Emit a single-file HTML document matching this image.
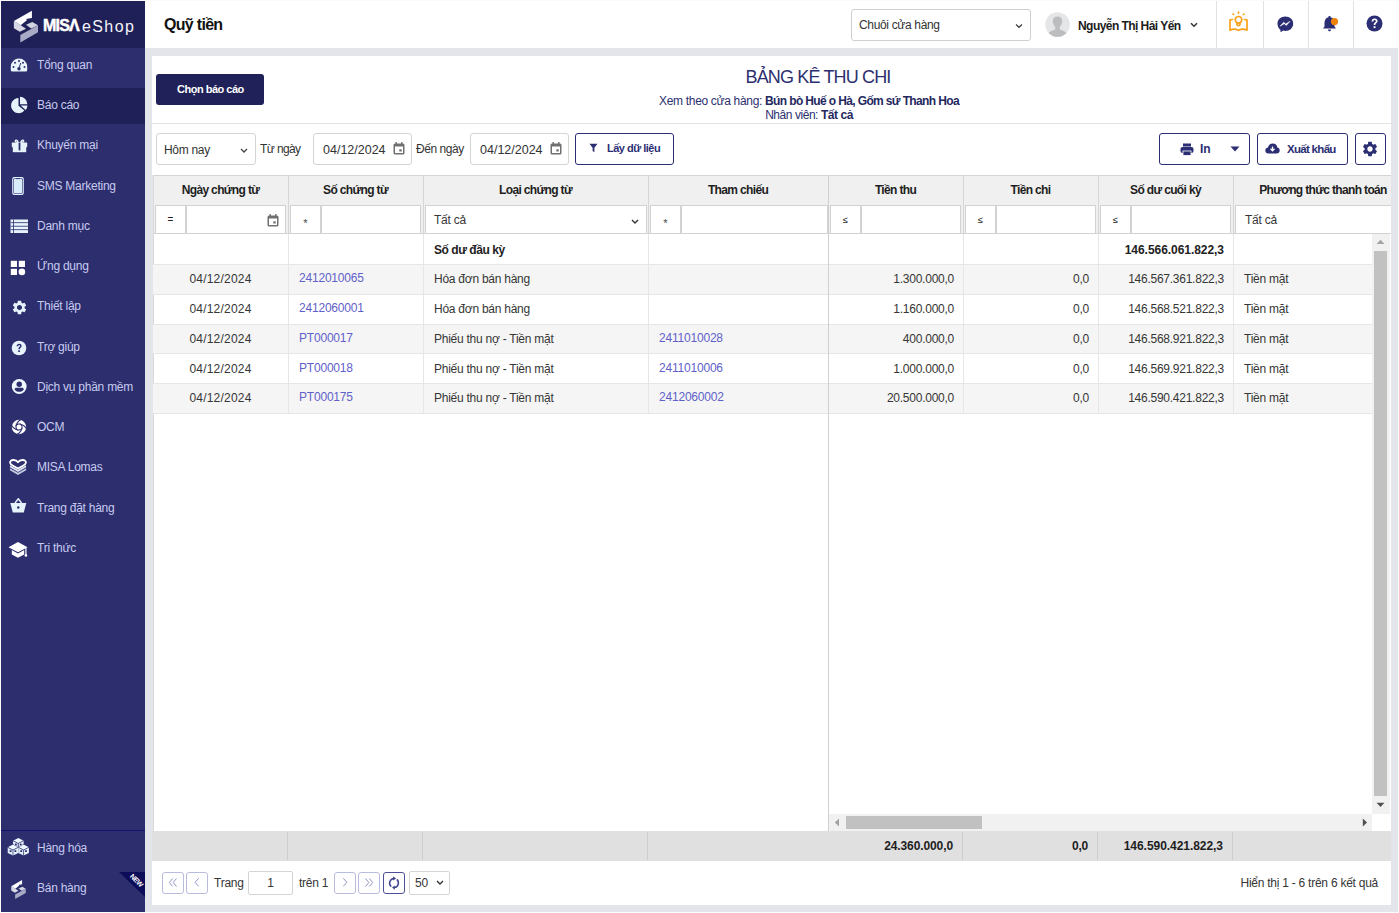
<!DOCTYPE html>
<html><head><meta charset="utf-8">
<style>
*{box-sizing:border-box;margin:0;padding:0}
html,body{width:1399px;height:913px;overflow:hidden;background:#fcfafa}
body{font-family:"Liberation Sans",sans-serif;color:#212121;position:relative}
.a{position:absolute;white-space:nowrap}
.t12{font-size:12px;line-height:14px}
.st{color:#c8cbee;font-size:12px;line-height:14px;letter-spacing:-0.25px;left:37px}
.ic{position:absolute}
.hd{font-size:12px;line-height:14px;font-weight:bold;color:#1e1e1e;letter-spacing:-0.65px;top:183px;text-align:center}
.op{position:absolute;top:205px;height:29px;width:31px;border:1px solid #d2d2d2;background:#fff;font-size:10px;line-height:28px;text-align:center;color:#222}
.inp{position:absolute;top:205px;height:29px;border:1px solid #d2d2d2;background:#fff}
.row{position:absolute;left:153px;width:1219px;height:30px}
.rb{position:absolute;left:153px;width:1219px;height:1px;background:#e6e6e6}
.cd{position:absolute;width:1px;background:#e6e6e6}
.tx{font-size:12px;line-height:14px;letter-spacing:-0.25px;color:#363636}
.lk{font-size:12px;line-height:14px;letter-spacing:-0.2px;color:#5f61c9}
.pb{position:absolute;top:872px;height:22px;width:22px;border:1px solid #b3b6d8;border-radius:3px;background:#fff}
</style></head><body>
<!-- SIDEBAR -->
<div class="a" style="left:1px;top:1px;width:144px;height:911px;background:#2c2e6e"></div>
<div class="a" style="left:1px;top:1px;width:144px;height:47px;background:#1f2057"></div>
<div class="a" style="left:1px;top:88px;width:144px;height:36px;background:#1f2057"></div>
<div class="a" style="left:1px;top:830px;width:144px;height:1px;background:#170f6c"></div>
<!-- logo -->
<svg class="ic" style="left:0;top:0" width="50" height="48" viewBox="0 0 50 48">
  <path d="M13.9 21.1 L31.9 10.8 L31.9 18 L26 19.1 L27.1 20 L20.7 25.3 Z" fill="#ffffff"/>
  <path d="M13.9 21.1 L20.7 25.3 L26 28.8 L19.8 31.8 L13.9 28.3 Z" fill="#d9d9e6"/>
  <path d="M26 24.8 L32.3 22 L38 25.3 L31.2 28.6 Z" fill="#d4d5e3"/>
  <path d="M20.3 34.9 L38 25.3 L38 32.3 L20.3 42.4 Z" fill="#a9abc6"/>
</svg>
<div class="a" style="left:43px;top:17px;font-size:16px;line-height:18px;font-weight:bold;color:#fff;letter-spacing:-0.8px;-webkit-text-stroke:0.5px #fff">MISΛ</div>
<div class="a" style="left:82px;top:18px;font-size:16px;line-height:18px;color:#f4f4fa;letter-spacing:1.4px">eShop</div>
<!-- menu -->
<svg class="ic" style="left:10px;top:58px" width="18" height="14" viewBox="0 0 18 14"><path d="M9 0.6 A8.2 8.2 0 0 0 0.8 8.8 L0.8 12 Q0.8 13.6 2.4 13.6 L15.6 13.6 Q17.2 13.6 17.2 12 L17.2 8.8 A8.2 8.2 0 0 0 9 0.6 Z" fill="#e9f5fc"/><circle cx="3.5" cy="8.9" r="1" fill="#2c2e6e"/><circle cx="5" cy="4.8" r="1" fill="#2c2e6e"/><circle cx="9" cy="3" r="1" fill="#2c2e6e"/><circle cx="13" cy="4.8" r="1" fill="#2c2e6e"/><circle cx="14.5" cy="8.9" r="1" fill="#2c2e6e"/><path d="M9 10.6 L10.6 5.3" stroke="#2c2e6e" stroke-width="1" stroke-linecap="round"/><circle cx="9" cy="10.7" r="1.7" fill="#2c2e6e"/></svg>
<div class="a st" style="top:58px">Tổng quan</div>
<svg class="ic" style="left:10.6px;top:96px" width="18" height="18" viewBox="0 0 18 18"><path d="M7.5 2 L7.5 9.8 L13.4 14.6 A7.6 7.6 0 1 1 7.5 2 Z" fill="#e6f3fb"/><path d="M9 0.8 A7.3 7.3 0 0 1 16.3 8.2 L9 8.2 Z" fill="#e6f3fb"/><path d="M9.6 9.6 L16.5 9.6 A7.4 7.4 0 0 1 14.7 13.9 Z" fill="#e6f3fb"/></svg>
<div class="a st" style="top:98px">Báo cáo</div>
<svg class="ic" style="left:11px;top:138px" width="17" height="15" viewBox="0 0 17 15"><path d="M7.3 4.4 C6.4 1.6 4.2 1.6 4.3 3.2 C4.4 4 5.6 4.4 7.3 4.4 M9.7 4.4 C10.6 1.6 12.8 1.6 12.7 3.2 C12.6 4 11.4 4.4 9.7 4.4" fill="none" stroke="#e6f3fb" stroke-width="1.3"/><rect x="0.8" y="4.6" width="15.4" height="4.6" rx="0.6" fill="#e6f3fb"/><rect x="1.8" y="8.6" width="13.4" height="5.6" fill="#e6f3fb"/><rect x="7.6" y="5" width="1.8" height="7.4" fill="#2c2e6e"/></svg>
<div class="a st" style="top:138px">Khuyến mại</div>
<svg class="ic" style="left:11px;top:176px" width="14" height="20" viewBox="0 0 14 20"><rect x="1.2" y="1" width="11.6" height="18" rx="2" fill="#e6f3fb"/><rect x="2.4" y="2.2" width="9.2" height="15.6" rx="1" fill="#2c2e6e"/><rect x="3" y="2.8" width="8" height="14.4" rx="0.6" fill="#d8ecfa"/><rect x="5" y="2.2" width="4" height="0.9" fill="#2c2e6e"/></svg>
<div class="a st" style="top:179px">SMS Marketing</div>
<svg class="ic" style="left:10px;top:219px" width="19" height="15" viewBox="0 0 19 15"><rect x="0.5" y="0.5" width="17.5" height="13.5" fill="#e6f3fb"/><rect x="0.5" y="3.3" width="17.5" height="0.8" fill="#2c2e6e"/><rect x="0.5" y="6.8" width="17.5" height="0.8" fill="#2c2e6e"/><rect x="0.5" y="10.3" width="17.5" height="0.8" fill="#2c2e6e"/><rect x="3" y="0.5" width="0.8" height="13.5" fill="#2c2e6e"/></svg>
<div class="a st" style="top:219px">Danh mục</div>
<svg class="ic" style="left:10px;top:260px" width="17" height="17" viewBox="0 0 17 17"><rect x="0.8" y="0.8" width="6.2" height="6.2" fill="#fff"/><rect x="8.8" y="0.8" width="6.2" height="6.2" fill="#fff"/><rect x="0.8" y="8.8" width="6.2" height="6.2" fill="#fff"/><circle cx="11.9" cy="11.9" r="3.3" fill="#fff"/></svg>
<div class="a st" style="top:259px">Ứng dụng</div>
<svg class="ic" style="left:11px;top:299px" width="17" height="17" viewBox="0 0 24 24"><path fill="#e6f3fb" d="M19.14 12.94c.04-.3.06-.61.06-.94 0-.32-.02-.64-.07-.94l2.03-1.58a.49.49 0 0 0 .12-.61l-1.92-3.32a.488.488 0 0 0-.59-.22l-2.39.96c-.5-.38-1.03-.7-1.62-.94l-.36-2.54a.484.484 0 0 0-.48-.41h-3.84c-.24 0-.43.17-.47.41l-.36 2.54c-.59.24-1.13.57-1.62.94l-2.39-.96c-.22-.08-.47 0-.59.22L2.74 8.87c-.12.21-.08.47.12.61l2.03 1.58c-.05.3-.09.63-.09.94s.02.64.07.94l-2.03 1.58a.49.49 0 0 0-.12.61l1.92 3.32c.12.22.37.29.59.22l2.39-.96c.5.38 1.03.7 1.62.94l.36 2.54c.05.24.24.41.48.41h3.84c.24 0 .44-.17.47-.41l.36-2.54c.59-.24 1.13-.56 1.62-.94l2.39.96c.22.08.47 0 .59-.22l1.92-3.32c.12-.22.07-.47-.12-.61l-2.01-1.58zM12 15.6c-1.98 0-3.6-1.62-3.6-3.6s1.62-3.6 3.6-3.6 3.6 1.62 3.6 3.6-1.62 3.6-3.6 3.6z"/></svg>
<div class="a st" style="top:299px">Thiết lập</div>
<svg class="ic" style="left:11px;top:340px" width="16" height="16" viewBox="0 0 16 16"><circle cx="8" cy="8" r="7.3" fill="#e6f3fb"/><path d="M5.6 6.2 C5.6 4.6 6.7 3.7 8.1 3.7 C9.6 3.7 10.6 4.6 10.6 5.9 C10.6 7.5 8.8 7.6 8.8 9.3 L7.3 9.3 C7.3 7.2 9 7.2 9 6 C9 5.4 8.6 5.1 8.1 5.1 C7.5 5.1 7.2 5.5 7.2 6.2 Z" fill="#2c2e6e"/><rect x="7.2" y="10.3" width="1.7" height="1.7" fill="#2c2e6e"/></svg>
<div class="a st" style="top:340px">Trợ giúp</div>
<svg class="ic" style="left:11px;top:379px" width="16" height="16" viewBox="0 0 16 16"><circle cx="8.2" cy="7.5" r="7.4" fill="#eef8fd"/><circle cx="8.2" cy="5.3" r="2.7" fill="#2c2e6e"/><path d="M3.6 10.4 C3.6 9.2 4.5 8.7 5.5 8.7 L10.9 8.7 C11.9 8.7 12.8 9.2 12.8 10.4 C11.9 12.1 10.2 12.8 8.2 12.8 C6.2 12.8 4.5 12.1 3.6 10.4 Z" fill="#2c2e6e"/></svg>
<div class="a st" style="top:380px">Dịch vụ phần mềm</div>
<svg class="ic" style="left:11px;top:419px" width="16" height="16" viewBox="0 0 16 16"><circle cx="8" cy="8" r="7.2" fill="#fff"/><circle cx="8" cy="8" r="3.5" fill="#2c2e6e"/><path d="M4.75 7.43 C5.59 4.56 7.45 1.72 10.04 0.37" fill="none" stroke="#2c2e6e" stroke-width="1.15"/><path d="M8.57 4.75 C11.44 5.59 14.28 7.45 15.63 10.04" fill="none" stroke="#2c2e6e" stroke-width="1.15"/><path d="M11.25 8.57 C10.41 11.44 8.55 14.28 5.96 15.63" fill="none" stroke="#2c2e6e" stroke-width="1.15"/><path d="M7.43 11.25 C4.56 10.41 1.72 8.55 0.37 5.96" fill="none" stroke="#2c2e6e" stroke-width="1.15"/><circle cx="8" cy="8" r="2.5" fill="#fff"/></svg>
<div class="a st" style="top:420px">OCM</div>
<svg class="ic" style="left:9px;top:459px" width="19" height="17" viewBox="0 0 19 17"><path d="M0.9 9.2 L9 13.8 L17.1 9.2 L17.1 11.3 L9 15.9 L0.9 11.3 Z" fill="#c2c7de"/><path d="M0.9 6.2 L9 10.8 L17.1 6.2 L17.1 8.3 L9 12.9 L0.9 8.3 Z" fill="#dfe5f2"/><path d="M9 3.3 C7.8 1.4 5.8 0.9 4.2 1 C2.1 1.1 1 2.3 1.1 3.7 C1.2 4.9 2.4 5.8 4 6.7 L9 9.5 L14 6.7 C15.6 5.8 16.8 4.9 16.9 3.7 C17 2.3 15.9 1.1 13.8 1 C12.2 0.9 10.2 1.4 9 3.3 Z" fill="#2c2e6e" stroke="#ffffff" stroke-width="1.8" stroke-linejoin="round"/></svg>
<div class="a st" style="top:460px">MISA Lomas</div>
<svg class="ic" style="left:10px;top:498px" width="17" height="16" viewBox="0 0 17 16"><path d="M5 5 L8.3 0.8 L11.6 5" fill="none" stroke="#e6f3fb" stroke-width="1.5"/><path d="M0.3 5 L16.3 5 L13.8 14.5 L2.8 14.5 Z" fill="#e6f3fb"/><circle cx="8.3" cy="9.5" r="1.2" fill="#2c2e6e"/></svg>
<div class="a st" style="top:501px">Trang đặt hàng</div>
<svg class="ic" style="left:8px;top:541px" width="21" height="18" viewBox="0 0 21 18"><path d="M0.5 6.2 L10 1 L19.5 6.2 L10 11.2 Z" fill="#fff"/><path d="M3.8 9 L3.8 13.5 L10 16.8 L16.2 13.5 L16.2 9 L10 12.4 Z" fill="#fff"/><rect x="17.3" y="6.5" width="1.2" height="7" fill="#fff"/><circle cx="17.9" cy="14.4" r="1.3" fill="#fff"/></svg>
<div class="a st" style="top:541px">Tri thức</div>
<svg class="ic" style="left:7px;top:837px" width="23" height="20" viewBox="0 0 23 20"><path d="M11.3 1 L16.6 3.7 L11.3 6.4 L6.000000000000001 3.7 Z" fill="#eef7fd"/><path d="M6.000000000000001 3.7 L11.3 6.4 L11.3 12 L6.000000000000001 9.3 Z" fill="#dcebf7"/><path d="M11.3 6.4 L16.6 3.7 L16.6 9.3 L11.3 12 Z" fill="#e6f3fb"/><path d="M6.000000000000001 3.7 L11.3 6.4 L16.6 3.7 M11.3 6.4 L11.3 12" fill="none" stroke="#2c2e6e" stroke-width="0.7"/><rect x="8.0" y="6.6" width="1.8" height="1.8" fill="#2c2e6e"/><rect x="12.8" y="6.6" width="1.8" height="1.8" fill="#2c2e6e"/><path d="M0.3 10 L5.9 7 L11.3 10 L16.7 7 L22.3 10 L22.3 16.5 L11.3 19.5 L0.3 16.5 Z" fill="#2c2e6e"/><path d="M6 7.6 L11.3 10.3 L6 13.0 L0.7000000000000002 10.3 Z" fill="#eef7fd"/><path d="M0.7000000000000002 10.3 L6 13.0 L6 18.6 L0.7000000000000002 15.9 Z" fill="#dcebf7"/><path d="M6 13.0 L11.3 10.3 L11.3 15.9 L6 18.6 Z" fill="#e6f3fb"/><path d="M0.7000000000000002 10.3 L6 13.0 L11.3 10.3 M6 13.0 L6 18.6" fill="none" stroke="#2c2e6e" stroke-width="0.7"/><rect x="2.7" y="13.2" width="1.8" height="1.8" fill="#2c2e6e"/><rect x="7.5" y="13.2" width="1.8" height="1.8" fill="#2c2e6e"/><path d="M16.6 7.6 L21.900000000000002 10.3 L16.6 13.0 L11.3 10.3 Z" fill="#eef7fd"/><path d="M11.3 10.3 L16.6 13.0 L16.6 18.6 L11.3 15.9 Z" fill="#dcebf7"/><path d="M16.6 13.0 L21.900000000000002 10.3 L21.900000000000002 15.9 L16.6 18.6 Z" fill="#e6f3fb"/><path d="M11.3 10.3 L16.6 13.0 L21.900000000000002 10.3 M16.6 13.0 L16.6 18.6" fill="none" stroke="#2c2e6e" stroke-width="0.7"/><rect x="13.3" y="13.2" width="1.8" height="1.8" fill="#2c2e6e"/><rect x="18.1" y="13.2" width="1.8" height="1.8" fill="#2c2e6e"/></svg>
<div class="a st" style="top:841px">Hàng hóa</div>
<svg class="ic" style="left:11px;top:880px" width="15" height="19" viewBox="13.9 10.8 24.1 31.6">
  <path d="M13.9 21.1 L31.9 10.8 L31.9 18 L26 19.1 L27.1 20 L20.7 25.3 Z" fill="#ffffff"/>
  <path d="M13.9 21.1 L20.7 25.3 L26 28.8 L19.8 31.8 L13.9 28.3 Z" fill="#d9d9e6"/>
  <path d="M26 24.8 L32.3 22 L38 25.3 L31.2 28.6 Z" fill="#d4d5e3"/>
  <path d="M20.3 34.9 L38 25.3 L38 32.3 L20.3 42.4 Z" fill="#a9abc6"/>
</svg>
<div class="a st" style="top:881px">Bán hàng</div>
<svg class="ic" style="left:119px;top:872px" width="26" height="26" viewBox="0 0 26 26"><path d="M0 0 L26 0 L26 25 Z" fill="#0d0c58"/><text x="17.5" y="8.5" transform="rotate(45 17.5 8.5)" font-family="Liberation Sans" font-size="7" font-weight="bold" fill="#fff" text-anchor="middle" dy="2.3" letter-spacing="-0.3">NEW</text></svg>
<!-- HEADER -->
<div class="a" style="left:145px;top:1px;width:1253px;height:47px;background:#fff"></div>
<div class="a" style="left:145px;top:48px;width:1253px;height:864px;background:#e4e5ea"></div>
<div class="a" style="left:164px;top:16px;font-size:16px;line-height:18px;font-weight:bold;color:#111;letter-spacing:-0.7px">Quỹ tiền</div>
<div class="a" style="left:851px;top:9px;width:180px;height:32px;border:1px solid #cfcfcf;border-radius:3px;background:#fff"></div>
<div class="a t12" style="left:859px;top:18px;color:#333;letter-spacing:-0.34px">Chuôi cửa hàng</div>
<svg class="ic" style="left:1015px;top:23px" width="8" height="6" viewBox="0 0 8 6"><path d="M1 1.5 L4 4.3 L7 1.5" fill="none" stroke="#444" stroke-width="1.3"/></svg>
<svg class="ic" style="left:1045px;top:12px" width="25" height="25" viewBox="0 0 25 25"><defs><clipPath id="av"><circle cx="12.5" cy="12.5" r="12.3"/></clipPath></defs><circle cx="12.5" cy="12.5" r="12.3" fill="#e5e6e8"/><path clip-path="url(#av)" fill="#bcbdbf" d="M2.5 22.5 C4 19.5 7.5 18.6 10.2 17.6 L10.2 14.8 C8.8 13.8 8.3 12 8.1 10.8 C7.5 10.6 7.4 9.6 7.9 9.3 C7.9 6 9.6 4.6 12.5 4.6 C15.4 4.6 17.1 6 17.1 9.3 C17.6 9.6 17.5 10.6 16.9 10.8 C16.7 12 16.2 13.8 14.8 14.8 L14.8 17.6 C17.5 18.6 21 19.5 22.5 22.5 L22.5 25 L2.5 25 Z"/></svg>
<div class="a" style="left:1078px;top:19px;font-size:12px;line-height:14px;font-weight:bold;color:#1c1c1c;letter-spacing:-0.55px">Nguyễn Thị Hải Yến</div>
<svg class="ic" style="left:1190px;top:22px" width="8" height="6" viewBox="0 0 8 6"><path d="M1 1.2 L4 4.2 L7 1.2" fill="none" stroke="#333" stroke-width="1.5"/></svg>
<div class="a" style="left:1216px;top:1px;width:1px;height:47px;background:#e2e2e6"></div>
<div class="a" style="left:1263px;top:1px;width:1px;height:47px;background:#e2e2e6"></div>
<div class="a" style="left:1308px;top:1px;width:1px;height:47px;background:#e2e2e6"></div>
<div class="a" style="left:1353px;top:1px;width:1px;height:47px;background:#e2e2e6"></div>
<svg class="ic" style="left:1228px;top:11px" width="21" height="21" viewBox="0 0 21 21"><g fill="none" stroke="#f9a11b" stroke-width="1.7" stroke-linecap="round" stroke-linejoin="round"><path d="M4.4 8.5 L2 8.9 L2 19.2 C4.5 17.9 7.8 18 10.5 19.3 C13.2 18 16.5 17.9 19 19.2 L19 8.9 L16.6 8.5"/><circle cx="10.5" cy="8.8" r="3.3"/><path d="M9 12 L9 13.8 Q10.5 15.6 12 13.8 L12 12"/></g><ellipse cx="10.5" cy="1.6" rx="0.9" ry="1.3" fill="#f9a11b"/><ellipse cx="5.3" cy="3.3" rx="1.2" ry="0.9" transform="rotate(30 5.3 3.3)" fill="#f9a11b"/><ellipse cx="15.7" cy="3.3" rx="1.2" ry="0.9" transform="rotate(-30 15.7 3.3)" fill="#f9a11b"/></svg>
<svg class="ic" style="left:1277px;top:16px" width="17" height="17" viewBox="0 0 17 17"><path d="M8.3 0.5 C12.8 0.5 16.2 3.6 16.2 7.7 C16.2 11.8 12.8 14.9 8.3 14.9 C7.6 14.9 6.9 14.8 6.3 14.6 L3.6 16.3 L3.4 13.8 C1.6 12.5 0.5 10.3 0.5 7.7 C0.5 3.6 3.8 0.5 8.3 0.5 Z" fill="#2b2e73"/><path d="M3 10.2 L6.8 6.2 L8.7 8 L13 5.3 L9.3 9.6 L7.3 7.7 Z" fill="#fff" stroke="#fff" stroke-width="0.5" stroke-linejoin="round"/></svg>
<svg class="ic" style="left:1322px;top:15px" width="17" height="18" viewBox="0 0 17 18"><path d="M7.5 1 C8.3 1 8.6 1.5 8.6 2.2 C11.2 2.9 12.5 5 12.5 7.8 L12.5 11.5 L14 13.5 L1 13.5 L2.5 11.5 L2.5 7.8 C2.5 5 3.8 2.9 6.4 2.2 C6.4 1.5 6.7 1 7.5 1 Z" fill="#2b2e73"/><path d="M6 14.5 L9 14.5 C9 15.5 8.4 16.3 7.5 16.3 C6.6 16.3 6 15.5 6 14.5 Z" fill="#2b2e73"/><circle cx="12.5" cy="6.6" r="3.6" fill="#ee8208"/></svg>
<svg class="ic" style="left:1366px;top:15px" width="17" height="17" viewBox="0 0 17 17"><circle cx="8.5" cy="8.5" r="8" fill="#2b2e73"/><path d="M5.6 6.4 C5.6 4.6 6.8 3.5 8.6 3.5 C10.4 3.5 11.6 4.6 11.6 6.1 C11.6 8 9.4 8.1 9.4 10.1 L7.7 10.1 C7.7 7.6 9.8 7.6 9.8 6.3 C9.8 5.5 9.3 5.1 8.6 5.1 C7.8 5.1 7.4 5.6 7.4 6.4 Z" fill="#fff"/><rect x="7.6" y="11.2" width="1.9" height="1.9" fill="#fff"/></svg>
<!-- CARD -->
<div class="a" style="left:152px;top:56px;width:1239px;height:849px;background:#fff"></div>
<div class="a" style="left:156px;top:74px;width:108px;height:31px;background:#1f2158;border-radius:3px"></div>
<div class="a" style="left:177px;top:83px;font-size:11px;line-height:13px;font-weight:bold;color:#fff;letter-spacing:-0.5px">Chọn báo cáo</div>
<div class="a" style="left:668px;top:67px;width:300px;text-align:center;font-size:18px;line-height:20px;color:#2c2f6f;letter-spacing:-0.85px">BẢNG KÊ THU CHI</div>
<div class="a t12" style="left:559px;top:94px;width:500px;text-align:center;color:#2c2f6f;letter-spacing:-0.32px">Xem theo cửa hàng: <b style="color:#25285f;letter-spacing:-0.63px">Bún bò Huế o Hà, Gốm sứ Thanh Hoa</b></div>
<div class="a t12" style="left:659px;top:108px;width:300px;text-align:center;color:#2c2f6f;letter-spacing:-0.45px">Nhân viên: <b style="color:#25285f">Tất cả</b></div>
<div class="a" style="left:152px;top:123px;width:1239px;height:1px;background:#e3e3e3"></div>
<!-- filter bar -->
<div class="a" style="left:156px;top:133px;width:100px;height:32px;border:1px solid #d4d4d4;border-radius:3px"></div>
<div class="a t12" style="left:164px;top:143px;color:#333;letter-spacing:-0.3px">Hôm nay</div>
<svg class="ic" style="left:240px;top:148px" width="8" height="5" viewBox="0 0 8 5"><path d="M1 1 L4 4 L7 1" fill="none" stroke="#444" stroke-width="1.3"/></svg>
<div class="a t12" style="left:260px;top:142px;color:#333;letter-spacing:-0.6px">Từ ngày</div>
<div class="a" style="left:313px;top:133px;width:99px;height:32px;border:1px solid #d4d4d4;border-radius:3px"></div>
<div class="a" style="left:323px;top:143px;font-size:12.5px;line-height:14px;color:#333;letter-spacing:0px">04/12/2024</div>
<svg class="ic" style="left:393px;top:142px" width="12" height="13" viewBox="0 0 12 13"><rect x="0.5" y="1.5" width="11" height="11" rx="1.5" fill="#707070"/><rect x="2" y="4.5" width="8" height="6.5" fill="#fff"/><rect x="6.3" y="7.3" width="2.4" height="2.2" fill="#707070"/><rect x="2.5" y="0" width="1.4" height="2.5" fill="#707070"/><rect x="8.1" y="0" width="1.4" height="2.5" fill="#707070"/></svg>
<div class="a t12" style="left:416px;top:142px;color:#333;letter-spacing:-0.45px">Đến ngày</div>
<div class="a" style="left:470px;top:133px;width:99px;height:32px;border:1px solid #d4d4d4;border-radius:3px"></div>
<div class="a" style="left:480px;top:143px;font-size:12.5px;line-height:14px;color:#333;letter-spacing:0px">04/12/2024</div>
<svg class="ic" style="left:550px;top:142px" width="12" height="13" viewBox="0 0 12 13"><rect x="0.5" y="1.5" width="11" height="11" rx="1.5" fill="#707070"/><rect x="2" y="4.5" width="8" height="6.5" fill="#fff"/><rect x="6.3" y="7.3" width="2.4" height="2.2" fill="#707070"/><rect x="2.5" y="0" width="1.4" height="2.5" fill="#707070"/><rect x="8.1" y="0" width="1.4" height="2.5" fill="#707070"/></svg>
<div class="a" style="left:575px;top:133px;width:99px;height:32px;border:1px solid #2b2e73;border-radius:3px"></div>
<svg class="ic" style="left:589px;top:143px" width="9" height="10" viewBox="0 0 9 10"><path d="M0.5 0.8 L8.5 0.8 L5.4 4.8 L5.4 9.2 L3.6 8 L3.6 4.8 Z" fill="#2b2e73"/></svg>
<div class="a" style="left:607px;top:142px;font-size:11px;line-height:13px;font-weight:bold;color:#2b2e73;letter-spacing:-0.5px">Lấy dữ liệu</div>
<!-- right buttons -->
<div class="a" style="left:1159px;top:133px;width:91px;height:32px;border:1px solid #2b2e73;border-radius:3px"></div>
<svg class="ic" style="left:1180px;top:143px" width="14" height="13" viewBox="0 0 14 13"><rect x="3" y="0.5" width="8" height="3" fill="#2b2e73"/><rect x="0.5" y="4" width="13" height="6" rx="2" fill="#2b2e73"/><rect x="3" y="8" width="8" height="4.5" fill="#2b2e73" stroke="#fff" stroke-width="0.8"/></svg>
<div class="a" style="left:1200px;top:142px;font-size:12px;line-height:14px;font-weight:bold;color:#2b2e73">In</div>
<svg class="ic" style="left:1230px;top:146px" width="10" height="6" viewBox="0 0 10 6"><path d="M0.5 0.5 L9.5 0.5 L5 5.5 Z" fill="#2b2e73"/></svg>
<div class="a" style="left:1257px;top:133px;width:91px;height:32px;border:1px solid #2b2e73;border-radius:3px"></div>
<svg class="ic" style="left:1265px;top:143px" width="15" height="11" viewBox="0 0 15 11"><path d="M3.5 10.5 C1.5 10.5 0.3 9.2 0.3 7.5 C0.3 5.9 1.5 4.8 3 4.6 C3.5 2.2 5.3 0.5 7.8 0.5 C10.2 0.5 12 2.1 12.3 4.5 C13.8 4.7 14.7 5.9 14.7 7.4 C14.7 9.2 13.4 10.5 11.6 10.5 Z" fill="#2b2e73"/><path d="M7.5 3.5 L7.5 7.5 M5.5 5.8 L7.5 7.9 L9.5 5.8" fill="none" stroke="#fff" stroke-width="1.3"/></svg>
<div class="a" style="left:1287px;top:142px;font-size:11.5px;line-height:14px;font-weight:bold;color:#2b2e73;letter-spacing:-0.7px">Xuất khẩu</div>
<div class="a" style="left:1355px;top:133px;width:31px;height:32px;border:1px solid #2b2e73;border-radius:3px"></div>
<svg class="ic" style="left:1361px;top:140px" width="18" height="18" viewBox="0 0 24 24"><path fill="#2b2e73" d="M19.14 12.94c.04-.3.06-.61.06-.94 0-.32-.02-.64-.07-.94l2.03-1.58a.49.49 0 0 0 .12-.61l-1.92-3.32a.488.488 0 0 0-.59-.22l-2.39.96c-.5-.38-1.03-.7-1.62-.94l-.36-2.54a.484.484 0 0 0-.48-.41h-3.840c-.24 0-.43.17-.47.41l-.36 2.54c-.59.24-1.130.57-1.62.94l-2.39-.96c-.22-.08-.47 0-.59.22L2.74 8.87c-.12.21-.08.47.12.61l2.03 1.58c-.05.3-.09.63-.09.94s.02.64.07.94l-2.03 1.58a.49.49 0 0 0-.12.61l1.92 3.32c.12.22.37.29.59.22l2.39-.96c.5.38 1.03.7 1.62.94l.36 2.54c.05.24.24.41.48.41h3.84c.24 0 .44-.17.47-.41l.36-2.54c.59-.24 1.13-.56 1.62-.94l2.39.96c.22.08.47 0 .59-.22l1.92-3.320c.12-.22.07-.47-.12-.61l-2.01-1.58zM12 15.6c-1.98 0-3.6-1.62-3.6-3.6s1.62-3.6 3.6-3.6 3.6 1.62 3.6 3.6-1.62 3.6-3.6 3.6z"/></svg>
<!-- TABLE -->
<div class="a" style="left:154px;top:175px;width:1237px;height:1px;background:#d5d5d5"></div>
<div class="a" style="left:154px;top:176px;width:1237px;height:58px;background:#f0f0f0"></div>
<div class="a" style="left:153px;top:233px;width:1238px;height:1px;background:#d5d5d5"></div>
<div class="a" style="left:152px;top:175px;width:1px;height:656px;background:#e4e5ea"></div>
<div class="a" style="left:288px;top:176px;width:1px;height:57px;background:#d5d5d5"></div>
<div class="a" style="left:423px;top:176px;width:1px;height:57px;background:#d5d5d5"></div>
<div class="a" style="left:648px;top:176px;width:1px;height:57px;background:#d5d5d5"></div>
<div class="a" style="left:828px;top:176px;width:1px;height:57px;background:#d5d5d5"></div>
<div class="a" style="left:963px;top:176px;width:1px;height:57px;background:#d5d5d5"></div>
<div class="a" style="left:1098px;top:176px;width:1px;height:57px;background:#d5d5d5"></div>
<div class="a" style="left:1233px;top:176px;width:1px;height:57px;background:#d5d5d5"></div>
<div class="a hd" style="left:153px;width:135px">Ngày chứng từ</div>
<div class="a hd" style="left:288px;width:135px">Số chứng từ</div>
<div class="a hd" style="left:423px;width:225px">Loại chứng từ</div>
<div class="a hd" style="left:648px;width:180px">Tham chiếu</div>
<div class="a hd" style="left:828px;width:135px">Tiền thu</div>
<div class="a hd" style="left:963px;width:135px">Tiền chi</div>
<div class="a hd" style="left:1098px;width:135px">Số dư cuối kỳ</div>
<div class="a hd" style="left:1233px;width:180px">Phương thức thanh toán</div>
<div class="op" style="left:155px">=</div>
<div class="inp" style="left:186px;width:100px"></div>
<div class="op" style="left:290px;line-height:35px;font-size:11px;color:#444">*</div>
<div class="inp" style="left:321px;width:100px"></div>
<div class="op" style="left:650px;line-height:35px;font-size:11px;color:#444">*</div>
<div class="inp" style="left:681px;width:147px"></div>
<div class="op" style="left:830px;font-size:9px">≤</div>
<div class="inp" style="left:861px;width:100px"></div>
<div class="op" style="left:965px;font-size:9px">≤</div>
<div class="inp" style="left:996px;width:100px"></div>
<div class="op" style="left:1100px;font-size:9px">≤</div>
<div class="inp" style="left:1131px;width:100px"></div>
<svg class="ic" style="left:267px;top:214px" width="12" height="13" viewBox="0 0 12 13"><rect x="0.5" y="1.5" width="11" height="11" rx="1.5" fill="#707070"/><rect x="2" y="4.5" width="8" height="6.5" fill="#fff"/><rect x="6.3" y="7.3" width="2.4" height="2.2" fill="#707070"/><rect x="2.5" y="0" width="1.4" height="2.5" fill="#707070"/><rect x="8.1" y="0" width="1.4" height="2.5" fill="#707070"/></svg>
<div class="inp" style="left:425px;width:222px"></div>
<div class="a tx" style="left:434px;top:213px">Tất cả</div>
<svg class="ic" style="left:631px;top:219px" width="8" height="5" viewBox="0 0 8 5"><path d="M1 1 L4 4 L7 1" fill="none" stroke="#333" stroke-width="1.4"/></svg>
<div class="inp" style="left:1235px;width:156px;border-right:none"></div>
<div class="a tx" style="left:1245px;top:213px">Tất cả</div>
<div class="a" style="left:154px;top:234px;width:1237px;height:597px;background:#fff"></div>
<div class="a" style="left:153px;top:175px;width:1px;height:656px;background:#d9d9d9"></div>
<div class="a" style="left:153px;top:265px;width:1219px;height:29px;background:#f5f5f5"></div>
<div class="a" style="left:153px;top:325px;width:1219px;height:28px;background:#f5f5f5"></div>
<div class="a" style="left:153px;top:384px;width:1219px;height:29px;background:#f5f5f5"></div>
<div class="rb" style="top:264px"></div>
<div class="rb" style="top:294px"></div>
<div class="rb" style="top:324px"></div>
<div class="rb" style="top:353px"></div>
<div class="rb" style="top:383px"></div>
<div class="rb" style="top:413px"></div>
<div class="cd" style="left:288px;top:234px;height:179px"></div>
<div class="cd" style="left:423px;top:234px;height:179px"></div>
<div class="cd" style="left:648px;top:234px;height:179px"></div>
<div class="cd" style="left:963px;top:234px;height:179px"></div>
<div class="cd" style="left:1098px;top:234px;height:179px"></div>
<div class="cd" style="left:1233px;top:234px;height:179px"></div>
<div class="a" style="left:828px;top:176px;width:1px;height:655px;background:#d0d0d0"></div>
<div class="a tx" style="left:434px;top:243px;font-weight:bold;color:#222;letter-spacing:-0.45px">Số dư đầu kỳ</div>
<div class="a tx" style="left:1098px;width:126px;text-align:right;top:243px;font-weight:bold;color:#222;letter-spacing:-0.05px">146.566.061.822,3</div>
<div class="a tx" style="left:153px;width:135px;text-align:center;top:272px;letter-spacing:0.2px">04/12/2024</div>
<div class="a lk" style="left:299px;top:271px">2412010065</div>
<div class="a tx" style="left:434px;top:272px">Hóa đơn bán hàng</div>
<div class="a tx" style="left:828px;width:126px;text-align:right;top:272px">1.300.000,0</div>
<div class="a tx" style="left:963px;width:126px;text-align:right;top:272px">0,0</div>
<div class="a tx" style="left:1098px;width:126px;text-align:right;top:272px">146.567.361.822,3</div>
<div class="a tx" style="left:1244px;top:272px">Tiền mặt</div>
<div class="a tx" style="left:153px;width:135px;text-align:center;top:302px;letter-spacing:0.2px">04/12/2024</div>
<div class="a lk" style="left:299px;top:301px">2412060001</div>
<div class="a tx" style="left:434px;top:302px">Hóa đơn bán hàng</div>
<div class="a tx" style="left:828px;width:126px;text-align:right;top:302px">1.160.000,0</div>
<div class="a tx" style="left:963px;width:126px;text-align:right;top:302px">0,0</div>
<div class="a tx" style="left:1098px;width:126px;text-align:right;top:302px">146.568.521.822,3</div>
<div class="a tx" style="left:1244px;top:302px">Tiền mặt</div>
<div class="a tx" style="left:153px;width:135px;text-align:center;top:332px;letter-spacing:0.2px">04/12/2024</div>
<div class="a lk" style="left:299px;top:331px">PT000017</div>
<div class="a tx" style="left:434px;top:332px">Phiếu thu nợ - Tiền mặt</div>
<div class="a lk" style="left:659px;top:331px">2411010028</div>
<div class="a tx" style="left:828px;width:126px;text-align:right;top:332px">400.000,0</div>
<div class="a tx" style="left:963px;width:126px;text-align:right;top:332px">0,0</div>
<div class="a tx" style="left:1098px;width:126px;text-align:right;top:332px">146.568.921.822,3</div>
<div class="a tx" style="left:1244px;top:332px">Tiền mặt</div>
<div class="a tx" style="left:153px;width:135px;text-align:center;top:362px;letter-spacing:0.2px">04/12/2024</div>
<div class="a lk" style="left:299px;top:361px">PT000018</div>
<div class="a tx" style="left:434px;top:362px">Phiếu thu nợ - Tiền mặt</div>
<div class="a lk" style="left:659px;top:361px">2411010006</div>
<div class="a tx" style="left:828px;width:126px;text-align:right;top:362px">1.000.000,0</div>
<div class="a tx" style="left:963px;width:126px;text-align:right;top:362px">0,0</div>
<div class="a tx" style="left:1098px;width:126px;text-align:right;top:362px">146.569.921.822,3</div>
<div class="a tx" style="left:1244px;top:362px">Tiền mặt</div>
<div class="a tx" style="left:153px;width:135px;text-align:center;top:391px;letter-spacing:0.2px">04/12/2024</div>
<div class="a lk" style="left:299px;top:390px">PT000175</div>
<div class="a tx" style="left:434px;top:391px">Phiếu thu nợ - Tiền mặt</div>
<div class="a lk" style="left:659px;top:390px">2412060002</div>
<div class="a tx" style="left:828px;width:126px;text-align:right;top:391px">20.500.000,0</div>
<div class="a tx" style="left:963px;width:126px;text-align:right;top:391px">0,0</div>
<div class="a tx" style="left:1098px;width:126px;text-align:right;top:391px">146.590.421.822,3</div>
<div class="a tx" style="left:1244px;top:391px">Tiền mặt</div>
<div class="a" style="left:1391px;top:170px;width:7px;height:700px;background:#e4e5ea"></div>
<div class="a" style="left:1372px;top:234px;width:18px;height:580px;background:#f1f1f1"></div>
<div class="a" style="left:1374px;top:251px;width:13px;height:545px;background:#c1c1c1"></div>
<svg class="ic" style="left:1376px;top:239px" width="9" height="6" viewBox="0 0 9 6"><path d="M0.5 5 L4.5 0.8 L8.5 5 Z" fill="#a3a3a3"/></svg>
<svg class="ic" style="left:1376px;top:802px" width="9" height="6" viewBox="0 0 9 6"><path d="M0.5 0.8 L4.5 5 L8.5 0.8 Z" fill="#505050"/></svg>
<div class="a" style="left:829px;top:814px;width:543px;height:17px;background:#f1f1f1"></div>
<div class="a" style="left:846px;top:816px;width:136px;height:13px;background:#c1c1c1"></div>
<svg class="ic" style="left:834px;top:818px" width="6" height="9" viewBox="0 0 6 9"><path d="M5 0.5 L0.8 4.5 L5 8.5 Z" fill="#a3a3a3"/></svg>
<svg class="ic" style="left:1362px;top:818px" width="6" height="9" viewBox="0 0 6 9"><path d="M0.8 0.5 L5 4.5 L0.8 8.5 Z" fill="#505050"/></svg>
<div class="a" style="left:152px;top:831px;width:1239px;height:30px;background:#e0e0e0"></div>
<div class="a" style="left:287px;top:832px;width:1px;height:28px;background:#cdcdcd"></div>
<div class="a" style="left:422px;top:832px;width:1px;height:28px;background:#cdcdcd"></div>
<div class="a" style="left:647px;top:832px;width:1px;height:28px;background:#cdcdcd"></div>
<div class="a" style="left:962px;top:832px;width:1px;height:28px;background:#cdcdcd"></div>
<div class="a" style="left:1097px;top:832px;width:1px;height:28px;background:#cdcdcd"></div>
<div class="a" style="left:1232px;top:832px;width:1px;height:28px;background:#cdcdcd"></div>
<div class="a tx" style="left:827px;width:126px;text-align:right;top:839px;font-weight:bold;color:#1e1e1e;letter-spacing:-0.1px">24.360.000,0</div>
<div class="a tx" style="left:962px;width:126px;text-align:right;top:839px;font-weight:bold;color:#1e1e1e">0,0</div>
<div class="a tx" style="left:1097px;width:126px;text-align:right;top:839px;font-weight:bold;color:#1e1e1e;letter-spacing:-0.05px">146.590.421.822,3</div>
<div class="pb" style="left:162px;border-color:#b9bbdf"></div>
<svg class="ic" style="left:168px;top:878px" width="10" height="9" viewBox="0 0 10 9"><path d="M4.7 0.5 L1.3 4.5 L4.7 8.5 M8.5 0.5 L5.1 4.5 L8.5 8.5" fill="none" stroke="#8f92c4" stroke-width="1"/></svg>
<div class="pb" style="left:186px;border-color:#b9bbdf"></div>
<svg class="ic" style="left:193px;top:878px" width="8" height="9" viewBox="0 0 8 9"><path d="M5.7 0.3 L2.1 4.3 L5.7 8.3" fill="none" stroke="#8f92c4" stroke-width="1"/></svg>
<div class="a tx" style="left:214px;top:876px">Trang</div>
<div class="a" style="left:248px;top:871px;width:45px;height:24px;border:1px solid #d4d4d4;border-radius:2px;background:#fff"></div>
<div class="a tx" style="left:248px;width:45px;text-align:center;top:876px">1</div>
<div class="a tx" style="left:299px;top:876px">trên 1</div>
<div class="pb" style="left:334px;border-color:#b9bbdf"></div>
<svg class="ic" style="left:341px;top:878px" width="8" height="9" viewBox="0 0 8 9"><path d="M2.3 0.3 L5.9 4.3 L2.3 8.3" fill="none" stroke="#8f92c4" stroke-width="1"/></svg>
<div class="pb" style="left:358px;border-color:#b9bbdf"></div>
<svg class="ic" style="left:364px;top:878px" width="10" height="9" viewBox="0 0 10 9"><path d="M1.5 0.5 L4.9 4.5 L1.5 8.5 M5.3 0.5 L8.7 4.5 L5.3 8.5" fill="none" stroke="#8f92c4" stroke-width="1"/></svg>
<div class="pb" style="left:383px;border-color:#4a4f96"></div>
<svg class="ic" style="left:387px;top:876px" width="14" height="14" viewBox="0 0 14 14"><path d="M7 2.4 A4.7 4.7 0 0 0 4.2 10.6" fill="none" stroke="#3e4390" stroke-width="1.5"/><path d="M7 11.6 A4.7 4.7 0 0 0 9.8 3.4" fill="none" stroke="#3e4390" stroke-width="1.5"/><path d="M6.2 0.3 L9 2.4 L6.2 4.5 Z" fill="#3e4390"/><path d="M7.8 9.5 L5 11.6 L7.8 13.7 Z" fill="#3e4390"/></svg>
<div class="a" style="left:409px;top:871px;width:41px;height:24px;border:1px solid #d4d4d4;border-radius:2px;background:#fff"></div>
<div class="a tx" style="left:415px;top:876px">50</div>
<svg class="ic" style="left:436px;top:880px" width="8" height="5" viewBox="0 0 8 5"><path d="M1 1 L4 4 L7 1" fill="none" stroke="#333" stroke-width="1.4"/></svg>
<div class="a tx" style="left:1100px;width:278px;text-align:right;top:876px">Hiển thị 1 - 6 trên 6 kết quả</div>
</body></html>
